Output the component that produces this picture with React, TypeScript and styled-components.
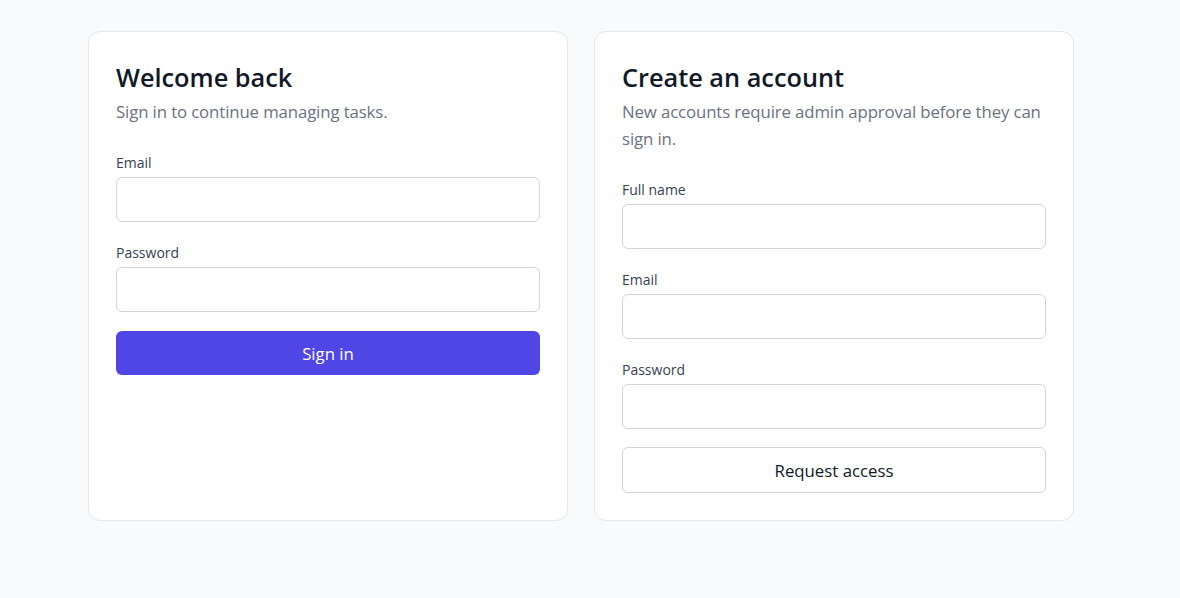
import React from "react";
import styled, { createGlobalStyle } from "styled-components";

const GlobalStyle = createGlobalStyle`
  * { box-sizing: border-box; }
  html, body { margin: 0; padding: 0; background: #f9fafb; }
  body {
    font-family: "Open Sans", "Noto Sans", Arial, sans-serif;
    color: #111827;
  }
`;

const Page = styled.main`
  min-height: 598px;
  background: #f9fafb;
  padding: 31px 0 0 88px;
`;

const Grid = styled.div`
  display: grid;
  grid-template-columns: 480px 480px;
  column-gap: 26px;
  align-items: stretch;
`;

const Card = styled.section`
  background: #ffffff;
  border: 1px solid #e5e7eb;
  border-radius: 12px;
  padding: 27px;
  display: flex;
  flex-direction: column;
`;

const Title = styled.h2`
  margin: 0;
  font-size: 25.3px;
  line-height: 36px;
  font-weight: 600;
  color: #111827;
`;

const Subtitle = styled.p`
  margin: 3px 0 0;
  font-size: 16.8px;
  line-height: 27px;
  letter-spacing: -0.12px;
  color: #6b7280;
`;

const Form = styled.form`
  margin-top: 27px;
  display: flex;
  flex-direction: column;
  gap: 20px;
`;

const Field = styled.label`
  display: flex;
  flex-direction: column;
  gap: 4px;
`;

const LabelText = styled.span`
  font-size: 14px;
  line-height: 21px;
  color: #374151;
`;

const Input = styled.input`
  height: 45px;
  width: 100%;
  border: 1px solid #d1d5db;
  border-radius: 6px;
  background: #fff;
  padding: 0 12px;
  font: inherit;
  font-size: 16px;
  outline: none;
`;

const Button = styled.button<{ $variant: "primary" | "secondary" }>`
  margin-top: ${(p) => (p.$variant === "primary" ? "-1px" : "-2px")};
  width: 100%;
  height: ${(p) => (p.$variant === "primary" ? "44px" : "46px")};
  border-radius: 6px;
  font-family: inherit;
  font-size: 16.8px;
  cursor: pointer;
  display: flex;
  align-items: center;
  justify-content: center;
  ${(p) =>
    p.$variant === "primary"
      ? `background: #4f46e5; color: #ffffff; border: none;`
      : `background: #ffffff; color: #111827; border: 1px solid #d1d5db;`}
`;

type FieldDef = { label: string; type: string };

const FormField: React.FC<FieldDef> = ({ label, type }) => (
  <Field>
    <LabelText>{label}</LabelText>
    <Input type={type} />
  </Field>
);

export default function App() {
  return (
    <>
      <GlobalStyle />
      <Page>
        <Grid>
          <Card>
            <Title>Welcome back</Title>
            <Subtitle>Sign in to continue managing tasks.</Subtitle>
            <Form onSubmit={(e) => e.preventDefault()}>
              <FormField label="Email" type="email" />
              <FormField label="Password" type="password" />
              <Button $variant="primary" type="submit">
                Sign in
              </Button>
            </Form>
          </Card>
          <Card>
            <Title>Create an account</Title>
            <Subtitle>
              New accounts require admin approval before they can sign in.
            </Subtitle>
            <Form onSubmit={(e) => e.preventDefault()}>
              <FormField label="Full name" type="text" />
              <FormField label="Email" type="email" />
              <FormField label="Password" type="password" />
              <Button $variant="secondary" type="submit">
                Request access
              </Button>
            </Form>
          </Card>
        </Grid>
      </Page>
    </>
  );
}
